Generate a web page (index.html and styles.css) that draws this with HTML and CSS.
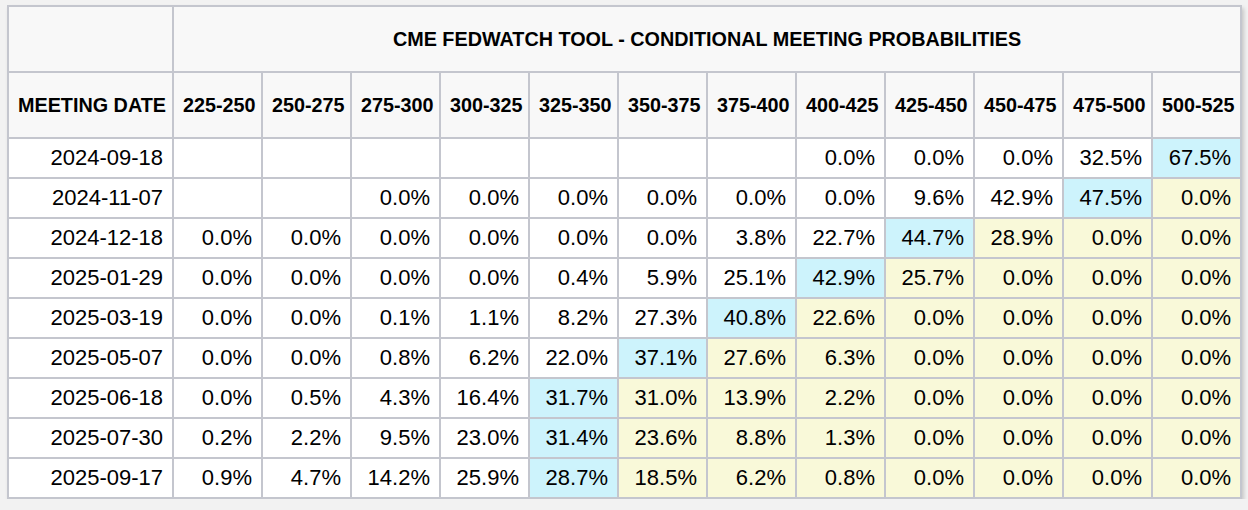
FILE: index.html
```html
<!DOCTYPE html>
<html>
<head>
<meta charset="utf-8">
<link rel="stylesheet" href="styles.css">
</head>
<body>
<div class="page">
<table class="fedwatch">
  <colgroup>
    <col class="c-date">
    <col span="12" class="c-rate">
  </colgroup>
  <thead>
    <tr class="h1">
      <th></th>
      <th colspan="12">CME FEDWATCH TOOL - CONDITIONAL MEETING PROBABILITIES</th>
    </tr>
    <tr class="h2">
      <th>MEETING DATE</th>
      <th>225-250</th><th>250-275</th><th>275-300</th><th>300-325</th><th>325-350</th><th>350-375</th><th>375-400</th><th>400-425</th><th>425-450</th><th>450-475</th><th>475-500</th><th>500-525</th>
    </tr>
  </thead>
  <tbody>
    <tr><td>2024-09-18</td><td></td><td></td><td></td><td></td><td></td><td></td><td></td><td>0.0%</td><td>0.0%</td><td>0.0%</td><td>32.5%</td><td class="hi">67.5%</td></tr>
    <tr><td>2024-11-07</td><td></td><td></td><td>0.0%</td><td>0.0%</td><td>0.0%</td><td>0.0%</td><td>0.0%</td><td>0.0%</td><td>9.6%</td><td>42.9%</td><td class="hi">47.5%</td><td class="up">0.0%</td></tr>
    <tr><td>2024-12-18</td><td>0.0%</td><td>0.0%</td><td>0.0%</td><td>0.0%</td><td>0.0%</td><td>0.0%</td><td>3.8%</td><td>22.7%</td><td class="hi">44.7%</td><td class="up">28.9%</td><td class="up">0.0%</td><td class="up">0.0%</td></tr>
    <tr><td>2025-01-29</td><td>0.0%</td><td>0.0%</td><td>0.0%</td><td>0.0%</td><td>0.4%</td><td>5.9%</td><td>25.1%</td><td class="hi">42.9%</td><td class="up">25.7%</td><td class="up">0.0%</td><td class="up">0.0%</td><td class="up">0.0%</td></tr>
    <tr><td>2025-03-19</td><td>0.0%</td><td>0.0%</td><td>0.1%</td><td>1.1%</td><td>8.2%</td><td>27.3%</td><td class="hi">40.8%</td><td class="up">22.6%</td><td class="up">0.0%</td><td class="up">0.0%</td><td class="up">0.0%</td><td class="up">0.0%</td></tr>
    <tr><td>2025-05-07</td><td>0.0%</td><td>0.0%</td><td>0.8%</td><td>6.2%</td><td>22.0%</td><td class="hi">37.1%</td><td class="up">27.6%</td><td class="up">6.3%</td><td class="up">0.0%</td><td class="up">0.0%</td><td class="up">0.0%</td><td class="up">0.0%</td></tr>
    <tr><td>2025-06-18</td><td>0.0%</td><td>0.5%</td><td>4.3%</td><td>16.4%</td><td class="hi">31.7%</td><td class="up">31.0%</td><td class="up">13.9%</td><td class="up">2.2%</td><td class="up">0.0%</td><td class="up">0.0%</td><td class="up">0.0%</td><td class="up">0.0%</td></tr>
    <tr><td>2025-07-30</td><td>0.2%</td><td>2.2%</td><td>9.5%</td><td>23.0%</td><td class="hi">31.4%</td><td class="up">23.6%</td><td class="up">8.8%</td><td class="up">1.3%</td><td class="up">0.0%</td><td class="up">0.0%</td><td class="up">0.0%</td><td class="up">0.0%</td></tr>
    <tr><td>2025-09-17</td><td>0.9%</td><td>4.7%</td><td>14.2%</td><td>25.9%</td><td class="hi">28.7%</td><td class="up">18.5%</td><td class="up">6.2%</td><td class="up">0.8%</td><td class="up">0.0%</td><td class="up">0.0%</td><td class="up">0.0%</td><td class="up">0.0%</td></tr>
  </tbody>
</table>
</div>
</body>
</html>
```

FILE: styles.css
```css
html, body {
  margin: 0;
  padding: 0;
  background: #f2f2f2;
}
.page {
  padding: 5px 0 0 7px;
}
.fedwatch {
  border-collapse: collapse;
  table-layout: fixed;
  width: 1234px;
  font-family: "Liberation Sans", Arial, sans-serif;
  color: #000;
  background: #ffffff;
  box-shadow: 2px 3px 4px rgba(0, 0, 0, 0.18);
}
.c-date { width: 165px; }
.c-rate { width: 89px; }
.fedwatch th,
.fedwatch td {
  border: 2px solid #c4c6ce;
  padding: 0 9px;
}
.fedwatch th {
  background: #f8f8f8;
  font-weight: bold;
  font-size: 19.8px;
  text-align: center;
  height: 64px;
  white-space: nowrap;
}
.fedwatch td {
  font-size: 22px;
  text-align: right;
  height: 38px;
  white-space: nowrap;
}
.fedwatch td.hi { background: #cdf3fc; }
.fedwatch td.up { background: #f9f9d9; }
```
